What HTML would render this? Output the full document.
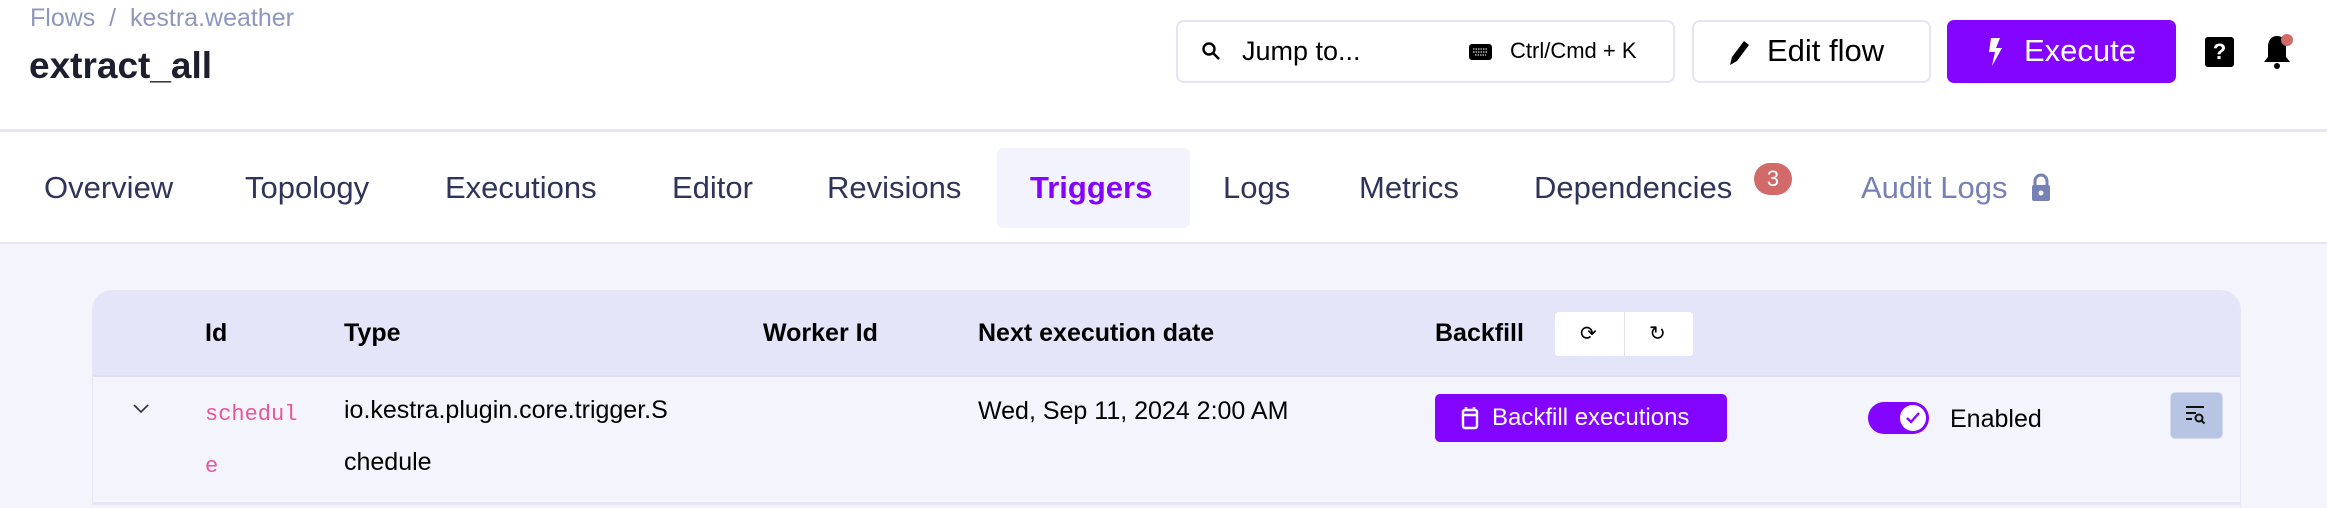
<!DOCTYPE html>
<html style="overflow:hidden"><head><meta charset="utf-8"><style>
*{box-sizing:border-box;margin:0;padding:0}
body{width:2327px;height:508px;overflow:hidden;background:#fff;font-family:"Liberation Sans",sans-serif;position:relative;color:#000}
.a{position:absolute;white-space:nowrap}
.tab{position:absolute;top:170px;font-size:31px;color:#2f3559;line-height:36px}
.th{position:absolute;top:318px;font-size:25px;font-weight:bold;line-height:30px}
.td{position:absolute;font-size:25px;line-height:30px}
</style></head><body>
<div class="a" style="left:30px;top:4px;font-size:25px;color:#8f97bd">Flows &nbsp;/&nbsp; kestra.weather</div>
<div class="a" style="left:29px;top:45px;font-size:37px;font-weight:bold;color:#1d1f2e">extract_all</div>

<div class="a" style="left:1176px;top:20px;width:499px;height:63px;border:2px solid #e4e4f6;border-radius:8px;background:#fff"></div>
<svg class="a" style="left:1201px;top:41px" width="20" height="20" viewBox="0 0 20 20"><circle cx="8" cy="8" r="5.5" fill="none" stroke="#000" stroke-width="2.4"/><path d="M12 12l6 6" stroke="#000" stroke-width="2.6"/></svg>
<div class="a" style="left:1242px;top:35px;font-size:27px;line-height:32px">Jump to...</div>
<svg class="a" style="left:1469px;top:44px" width="23" height="16" viewBox="0 0 23 16"><rect width="23" height="16" rx="3" fill="#000"/><path d="M4 5h15M4 8h15M6 11h11" stroke="#fff" stroke-width="1" stroke-dasharray="1.5 1"/></svg>
<div class="a" style="left:1510px;top:37px;font-size:22px;line-height:28px">Ctrl/Cmd + K</div>

<div class="a" style="left:1692px;top:20px;width:239px;height:63px;border:2px solid #e4e4f6;border-radius:8px;background:#fff"></div>
<svg class="a" style="left:1726px;top:37px" width="26" height="30" viewBox="0 0 26 30"><path d="M4 28l2-8L18 4l5 4-12 16z" fill="#000"/></svg>
<div class="a" style="left:1767px;top:32px;font-size:31px;line-height:38px">Edit flow</div>

<div class="a" style="left:1947px;top:20px;width:229px;height:63px;border-radius:7px;background:#8405ff"></div>
<svg class="a" style="left:1986px;top:37px" width="18" height="30" viewBox="0 0 18 30"><path d="M5 1h9l-4 10h6L6 29l3-14H3z" fill="#fff"/></svg>
<div class="a" style="left:2024px;top:32px;font-size:31px;line-height:38px;color:#fff">Execute</div>

<div class="a" style="left:2205px;top:37px;width:29px;height:30px;background:#000;border-radius:3px;color:#fff;font-weight:bold;font-size:22px;text-align:center;line-height:30px">?</div>
<svg class="a" style="left:2260px;top:32px" width="34" height="40" viewBox="0 0 34 40"><path d="M17 4c-6 0-9 5-9 11v10l-4 5h26l-4-5V15c0-6-3-11-9-11z" fill="#000"/><circle cx="17" cy="34" r="3" fill="#000"/><circle cx="27" cy="8" r="6" fill="#d36a6a"/></svg>

<div class="a" style="left:0;top:129px;width:2327px;height:3px;background:#e6e4f5"></div>
<div class="a" style="left:997px;top:148px;width:193px;height:80px;background:#f3f3fd;border-radius:6px"></div>
<div class="tab" style="left:44px">Overview</div>
<div class="tab" style="left:245px">Topology</div>
<div class="tab" style="left:445px">Executions</div>
<div class="tab" style="left:672px">Editor</div>
<div class="tab" style="left:827px">Revisions</div>
<div class="tab" style="left:1030px;color:#8405ff;font-weight:bold">Triggers</div>
<div class="tab" style="left:1223px">Logs</div>
<div class="tab" style="left:1359px">Metrics</div>
<div class="tab" style="left:1534px">Dependencies</div>
<div class="a" style="left:1754px;top:163px;width:38px;height:32px;border-radius:16px;background:#d36a6a;color:#fff;font-size:22px;text-align:center;line-height:32px">3</div>
<div class="tab" style="left:1861px;color:#7681b5">Audit Logs</div>
<svg class="a" style="left:2030px;top:173px" width="22" height="29" viewBox="0 0 22 29"><path d="M5 13V8a6 6 0 0 1 12 0v5" fill="none" stroke="#7681b5" stroke-width="3"/><rect x="2" y="12" width="18" height="16" rx="2" fill="#7681b5"/><circle cx="11" cy="20" r="2.5" fill="#fff"/></svg>
<div class="a" style="left:0;top:242px;width:2327px;height:2px;background:#e6e4f5"></div>
<div class="a" style="left:0;top:244px;width:2327px;height:264px;background:#f4f4fd"></div>

<div class="a" style="left:92px;top:290px;width:2149px;height:218px;border-radius:20px 20px 0 0;background:#f4f4fd;border:1px solid #e6e6f6;border-bottom:none;overflow:hidden">
 <div style="height:86px;background:#e5e5fa;border-bottom:2px solid #e0e0f2"></div>
</div>
<div class="a" style="left:92px;top:502px;width:2149px;height:3px;background:#e6e6f6"></div>
<div class="th" style="left:205px">Id</div>
<div class="th" style="left:344px">Type</div>
<div class="th" style="left:763px">Worker Id</div>
<div class="th" style="left:978px">Next execution date</div>
<div class="th" style="left:1435px">Backfill</div>
<div class="a" style="left:1555px;top:312px;width:138px;height:44px;background:#fff;border-radius:4px"></div>
<div class="a" style="left:1624px;top:312px;width:1px;height:44px;background:#e2e2ee"></div>
<div class="a" style="left:1580px;top:321px;font-size:20px">⟳</div>
<div class="a" style="left:1649px;top:321px;font-size:20px">↻</div>

<svg class="a" style="left:132px;top:403px" width="18" height="12" viewBox="0 0 18 12"><path d="M2 2l7 7 7-7" fill="none" stroke="#333" stroke-width="1.6"/></svg>
<div class="td" style="left:205px;top:389px;font-family:'Liberation Mono',monospace;font-size:22px;color:#e8559a;line-height:52px;width:95px;white-space:normal;word-break:break-all">schedule</div>
<div class="td" style="left:344px;top:384px;line-height:52px">io.kestra.plugin.core.trigger.S<br>chedule</div>
<div class="td" style="left:978px;top:396px">Wed, Sep 11, 2024 2:00 AM</div>
<div class="a" style="left:1435px;top:394px;width:292px;height:48px;background:#8405ff;border-radius:5px"></div>
<svg class="a" style="left:1461px;top:406px" width="18" height="24" viewBox="0 0 18 24"><rect x="2" y="4" width="14" height="18" rx="2" fill="none" stroke="#fff" stroke-width="2.4"/><path d="M2 9h14M5 1v4M13 1v4" stroke="#fff" stroke-width="2.4"/></svg>
<div class="a" style="left:1492px;top:403px;font-size:24px;color:#fff;line-height:30px">Backfill executions</div>
<div class="a" style="left:1868px;top:402px;width:61px;height:32px;border-radius:16px;background:#8405ff"></div>
<div class="a" style="left:1900px;top:405px;width:26px;height:26px;border-radius:13px;background:#fff"></div>
<svg class="a" style="left:1904px;top:409px" width="18" height="18" viewBox="0 0 18 18"><path d="M3 9l4 4 8-9" fill="none" stroke="#8405ff" stroke-width="2.4"/></svg>
<div class="td" style="left:1950px;top:404px">Enabled</div>
<div class="a" style="left:2170px;top:392px;width:53px;height:47px;background:#b8c4e3;border:1px solid #d6dcef;border-radius:5px"></div>
<svg class="a" style="left:2184px;top:404px" width="24" height="22" viewBox="0 0 24 22"><path d="M2 3h18M2 9h10M2 15h6" stroke="#111" stroke-width="2"/><circle cx="15" cy="14" r="3.5" fill="none" stroke="#111" stroke-width="2"/><path d="M17.5 16.5l3 3" stroke="#111" stroke-width="2"/></svg>
</body></html>
